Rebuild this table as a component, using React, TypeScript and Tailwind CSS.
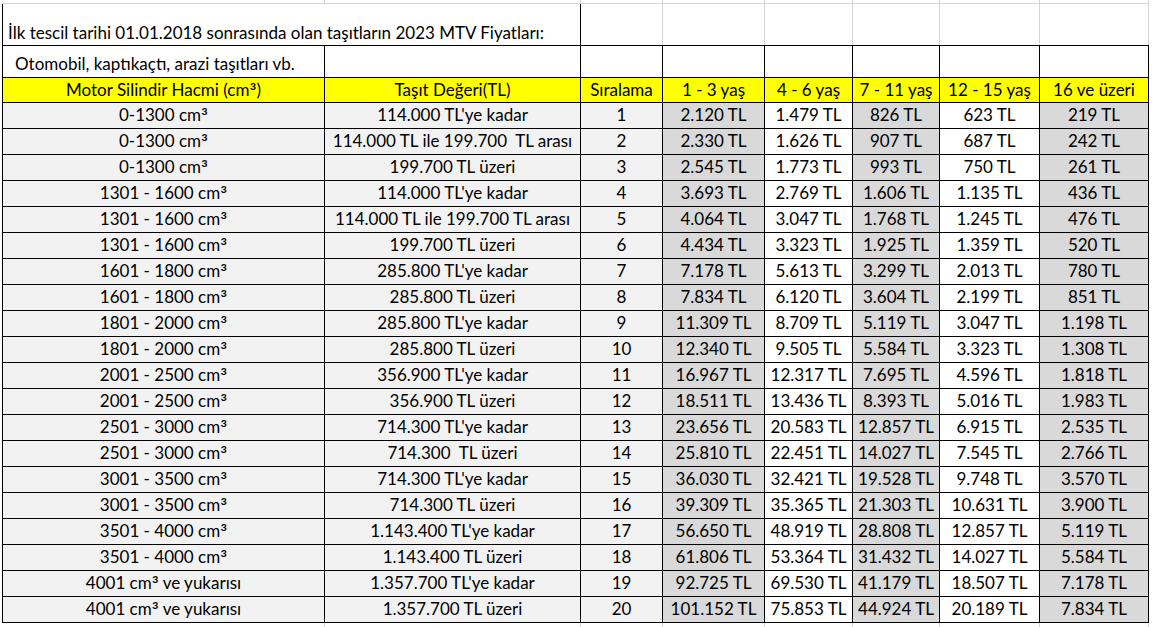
import React from 'react'

const COL_WIDTHS = ['w-[322px]', 'w-[256px]', 'w-[82px]', 'w-[102px]', 'w-[88px]', 'w-[87px]', 'w-[100px]', 'w-[109px]']

const HEADERS = ['Motor Silindir Hacmi (cm³)', 'Taşıt Değeri(TL)', 'Sıralama', '1 - 3 yaş', '4 - 6 yaş', '7 - 11 yaş', '12 - 15 yaş', '16 ve üzeri']

// column backgrounds for data rows
const CELL_BG = ['bg-[#f2f2f2]', 'bg-[#f2f2f2]', 'bg-[#f2f2f2]', 'bg-[#d9d9d9]', 'bg-white', 'bg-[#d9d9d9]', 'bg-white', 'bg-[#d9d9d9]']

const ROWS: string[][] = [
  ['0-1300 cm³', "114.000 TL'ye kadar", '1', '2.120 TL', '1.479 TL', '826 TL', '623 TL', '219 TL'],
  ['0-1300 cm³', '114.000 TL ile 199.700  TL arası', '2', '2.330 TL', '1.626 TL', '907 TL', '687 TL', '242 TL'],
  ['0-1300 cm³', '199.700 TL üzeri', '3', '2.545 TL', '1.773 TL', '993 TL', '750 TL', '261 TL'],
  ['1301 - 1600 cm³', "114.000 TL'ye kadar", '4', '3.693 TL', '2.769 TL', '1.606 TL', '1.135 TL', '436 TL'],
  ['1301 - 1600 cm³', '114.000 TL ile 199.700 TL arası', '5', '4.064 TL', '3.047 TL', '1.768 TL', '1.245 TL', '476 TL'],
  ['1301 - 1600 cm³', '199.700 TL üzeri', '6', '4.434 TL', '3.323 TL', '1.925 TL', '1.359 TL', '520 TL'],
  ['1601 - 1800 cm³', "285.800 TL'ye kadar", '7', '7.178 TL', '5.613 TL', '3.299 TL', '2.013 TL', '780 TL'],
  ['1601 - 1800 cm³', '285.800 TL üzeri', '8', '7.834 TL', '6.120 TL', '3.604 TL', '2.199 TL', '851 TL'],
  ['1801 - 2000 cm³', "285.800 TL'ye kadar", '9', '11.309 TL', '8.709 TL', '5.119 TL', '3.047 TL', '1.198 TL'],
  ['1801 - 2000 cm³', '285.800 TL üzeri', '10', '12.340 TL', '9.505 TL', '5.584 TL', '3.323 TL', '1.308 TL'],
  ['2001 - 2500 cm³', "356.900 TL'ye kadar", '11', '16.967 TL', '12.317 TL', '7.695 TL', '4.596 TL', '1.818 TL'],
  ['2001 - 2500 cm³', '356.900 TL üzeri', '12', '18.511 TL', '13.436 TL', '8.393 TL', '5.016 TL', '1.983 TL'],
  ['2501 - 3000 cm³', "714.300 TL'ye kadar", '13', '23.656 TL', '20.583 TL', '12.857 TL', '6.915 TL', '2.535 TL'],
  ['2501 - 3000 cm³', '714.300  TL üzeri', '14', '25.810 TL', '22.451 TL', '14.027 TL', '7.545 TL', '2.766 TL'],
  ['3001 - 3500 cm³', "714.300 TL'ye kadar", '15', '36.030 TL', '32.421 TL', '19.528 TL', '9.748 TL', '3.570 TL'],
  ['3001 - 3500 cm³', '714.300 TL üzeri', '16', '39.309 TL', '35.365 TL', '21.303 TL', '10.631 TL', '3.900 TL'],
  ['3501 - 4000 cm³', "1.143.400 TL'ye kadar", '17', '56.650 TL', '48.919 TL', '28.808 TL', '12.857 TL', '5.119 TL'],
  ['3501 - 4000 cm³', '1.143.400 TL üzeri', '18', '61.806 TL', '53.364 TL', '31.432 TL', '14.027 TL', '5.584 TL'],
  ['4001 cm³ ve yukarısı', "1.357.700 TL'ye kadar", '19', '92.725 TL', '69.530 TL', '41.179 TL', '18.507 TL', '7.178 TL'],
  ['4001 cm³ ve yukarısı', '1.357.700 TL üzeri', '20', '101.152 TL', '75.853 TL', '44.924 TL', '20.189 TL', '7.834 TL'],
]

const black = 'border border-black'
const grid = 'border-r border-[#d4d4d4]'

// Calibri's superscript three is larger than Lato's, so enlarge it a bit
function Cell({ text }: { text: string }) {
  const parts = text.split('³')
  return (
    <>
      {parts.map((p, i) => (
        <React.Fragment key={i}>
          {p}
          {i < parts.length - 1 && <span className="relative top-[4px] text-[21px] leading-[0]">³</span>}
        </React.Fragment>
      ))}
    </>
  )
}

export default function App() {
  return (
    <div className="min-h-[627px] bg-white pl-[2px] font-['Lato',_'Open_Sans',_sans-serif] text-[17px] text-black">
      <table className="table-fixed border-collapse">
        <colgroup>
          {COL_WIDTHS.map((w, i) => (
            <col key={i} className={w} />
          ))}
        </colgroup>
        <tbody>
          {/* sheet gridlines above the title */}
          <tr className="h-[3px]">
            {COL_WIDTHS.map((_, i) => (
              <td key={i} className={`${grid} border-b p-0`} />
            ))}
          </tr>

          {/* title */}
          <tr className="h-[42px]">
            <td colSpan={2} className={`${black} px-[5px] pb-[1px] align-bottom leading-[22px] whitespace-nowrap`}>
              İlk tescil tarihi 01.01.2018 sonrasında olan taşıtların 2023 MTV Fiyatları:
            </td>
            {COL_WIDTHS.slice(2).map((_, i) => (
              <td key={i} className={`${grid} border-b border-b-black p-0`} />
            ))}
          </tr>

          {/* vehicle type */}
          <tr className="h-[32px]">
            <td className={`${black} pl-[12px] pb-[2px] align-bottom leading-[22px] whitespace-nowrap`}>
              Otomobil, kaptıkaçtı, arazi taşıtları vb.
            </td>
            {COL_WIDTHS.slice(1).map((_, i) => (
              <td key={i} className={`${black} p-0`} />
            ))}
          </tr>

          {/* column headers */}
          <tr className="h-[25px] bg-[#ffff00]">
            {HEADERS.map((h) => (
              <td key={h} className={`${black} p-0 text-center leading-[22px] whitespace-nowrap`}>
                <Cell text={h} />
              </td>
            ))}
          </tr>

          {ROWS.map((row, r) => (
            <tr key={r} className="h-[26px]">
              {row.map((cell, c) => (
                <td
                  key={c}
                  className={`${black} ${CELL_BG[c]} p-0 text-center leading-[22px] whitespace-pre`}
                >
                  <Cell text={cell} />
                </td>
              ))}
            </tr>
          ))}

          {/* empty sheet row below */}
          <tr className="h-[26px]">
            {COL_WIDTHS.map((_, i) => (
              <td key={i} className={`${grid} p-0`} />
            ))}
          </tr>
        </tbody>
      </table>
    </div>
  )
}
